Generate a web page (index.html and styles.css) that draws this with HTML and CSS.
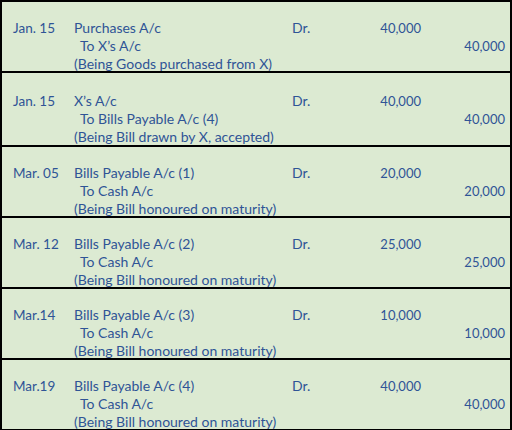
FILE: index.html
```html
<!DOCTYPE html>
<html>
<head>
<meta charset="utf-8">
<link rel="stylesheet" href="styles.css">
</head>
<body>
<div class="journal">
  <div class="entry">
    <div class="date">Jan. 15</div>
    <div class="acct">Purchases A/c</div>
    <div class="dr">Dr.</div>
    <div class="debit">40,000</div>
    <div class="to">To X’s A/c</div>
    <div class="credit">40,000</div>
    <div class="narr">(Being Goods purchased from X)</div>
  </div>
  <div class="entry tall">
    <div class="date">Jan. 15</div>
    <div class="acct">X’s A/c</div>
    <div class="dr">Dr.</div>
    <div class="debit">40,000</div>
    <div class="to">To Bills Payable A/c (4)</div>
    <div class="credit">40,000</div>
    <div class="narr">(Being Bill drawn by X, accepted)</div>
  </div>
  <div class="entry">
    <div class="date">Mar. 05</div>
    <div class="acct">Bills Payable A/c (1)</div>
    <div class="dr">Dr.</div>
    <div class="debit">20,000</div>
    <div class="to">To Cash A/c</div>
    <div class="credit">20,000</div>
    <div class="narr">(Being Bill honoured on maturity)</div>
  </div>
  <div class="entry">
    <div class="date">Mar. 12</div>
    <div class="acct">Bills Payable A/c (2)</div>
    <div class="dr">Dr.</div>
    <div class="debit">25,000</div>
    <div class="to">To Cash A/c</div>
    <div class="credit">25,000</div>
    <div class="narr">(Being Bill honoured on maturity)</div>
  </div>
  <div class="entry">
    <div class="date">Mar.14</div>
    <div class="acct">Bills Payable A/c (3)</div>
    <div class="dr">Dr.</div>
    <div class="debit">10,000</div>
    <div class="to">To Cash A/c</div>
    <div class="credit">10,000</div>
    <div class="narr">(Being Bill honoured on maturity)</div>
  </div>
  <div class="entry">
    <div class="date">Mar.19</div>
    <div class="acct">Bills Payable A/c (4)</div>
    <div class="dr">Dr.</div>
    <div class="debit">40,000</div>
    <div class="to">To Cash A/c</div>
    <div class="credit">40,000</div>
    <div class="narr">(Being Bill honoured on maturity)</div>
  </div>
</div>
</body>
</html>
```
FILE: styles.css
```css
html, body {
  margin: 0;
  padding: 0;
  background: #dcead2;
}
body {
  width: 512px;
  height: 430px;
  font-family: Lato, "Open Sans", sans-serif;
  font-size: 14px;
  color: #2f5496;
}
.journal {
  width: 512px;
  box-sizing: border-box;
  border: 2px solid #000;
  border-bottom: 0;
}
.entry {
  box-sizing: content-box;
  height: 52px;
  padding-top: 17px;
  border-bottom: 2px solid #000;
  display: grid;
  grid-template-columns: 11px 61px 218px 58px 71px 84px;
  grid-template-rows: 18px 18px 17px;
  line-height: 18px;
  white-space: nowrap;
}
.entry.tall {
  height: 53px;
  padding-top: 19px;
}
.date { grid-column: 2; grid-row: 1; font-size: 13.5px; }
.acct { grid-column: 3; grid-row: 1; }
.dr { grid-column: 4; grid-row: 1; }
.debit { grid-column: 5; grid-row: 1; text-align: right; font-size: 13px; }
.to { grid-column: 3; grid-row: 2; padding-left: 6px; }
.credit { grid-column: 6; grid-row: 2; text-align: right; font-size: 13px; }
.narr { grid-column: 3 / span 3; grid-row: 3; }
```
